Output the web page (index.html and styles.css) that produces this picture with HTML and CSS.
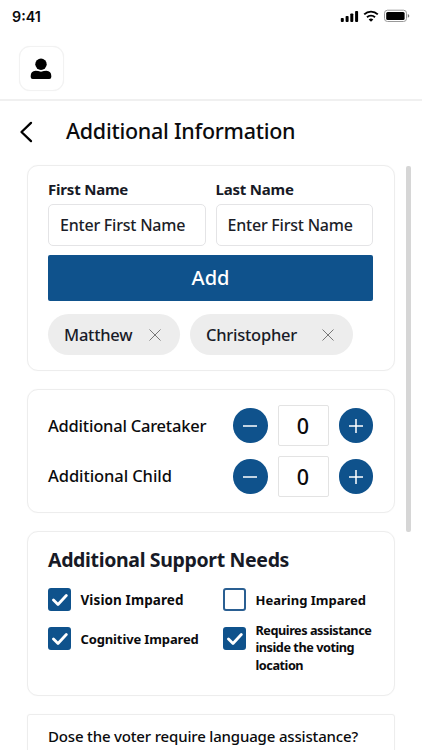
FILE: index.html
```html
<!DOCTYPE html>
<html lang="en">
<head>
<meta charset="utf-8">
<title>Additional Information</title>
<link rel="stylesheet" href="styles.css">
</head>
<body>
<div class="screen">
  <div class="status">
    <span class="time">9:41</span>
    <svg class="status-icons" width="70" height="14" viewBox="0 0 70 14">
      <g fill="#000">
        <rect x="0.8" y="8.9" width="3" height="4" rx="0.9"/>
        <rect x="5.6" y="6.9" width="3" height="6" rx="0.9"/>
        <rect x="10.3" y="4.4" width="3" height="8.500" rx="0.9"/>
        <rect x="15.1" y="1.900" width="3" height="11" rx="0.9"/>
        <path d="M31 12.800l2.300-2.300a3.400 3.400 0 0 0-4.600 0z"/>
      </g>
      <path d="M24.200 5.400a9.700 9.700 0 0 1 13.600 0M27 8.300a5.700 5.700 0 0 1 8 0" fill="none" stroke="#000" stroke-width="1.900"/>
      <rect x="44.500" y="1.200" width="22" height="11.300" rx="3" fill="none" stroke="#999"/>
      <rect x="46.200" y="2.900" width="18.400" height="8" rx="1.500" fill="#000"/>
      <path d="M67.800 5v3.800q1.500-.8 1.500-1.900t-1.500-1.900z" fill="#777"/>
    </svg>
  </div>
  <header class="top">
    <button class="avatar" aria-label="Profile">
      <svg width="22" height="22" viewBox="0 0 22 22">
        <circle cx="11" cy="6.200" r="5.700"/>
        <path d="M5.600 12.800q2.400 0 5.400 1 3-1 5.400-1 4.900.2 4.900 5.200v1q0 2-2 2H2.700q-2 0-2-2v-1q0-5 4.900-5.200z"/>
      </svg>
    </button>
  </header>
  <div class="title-row">
    <svg class="back" width="14" height="22" viewBox="0 0 14 22"><path d="M12 1.900L2.500 11l9.500 9.100"/></svg>
    <h1>Additional Information</h1>
  </div>
  <div class="content">
    <main class="cards">
      <section class="card names">
        <div class="fields">
          <label class="field"><span class="lab">First Name</span><span class="input">Enter First Name</span></label>
          <label class="field"><span class="lab">Last Name</span><span class="input">Enter First Name</span></label>
        </div>
        <button class="add"><span>Add</span></button>
        <div class="chips">
          <span class="chip matthew"><span class="chip-name">Matthew</span><svg width="12" height="12" viewBox="0 0 12 12"><path d="M.5.500l11 11M11.500.500l-11 11"/></svg></span>
          <span class="chip christopher"><span class="chip-name">Christopher</span><svg width="12" height="12" viewBox="0 0 12 12"><path d="M.5.500l11 11M11.500.500l-11 11"/></svg></span>
        </div>
      </section>
      <section class="card counters">
        <div class="counter">
          <span class="counter-name">Additional Caretaker</span>
          <button class="round"><svg width="14" height="14" viewBox="0 0 14 14"><path d="M0 7h14"/></svg></button>
          <span class="count">0</span>
          <button class="round"><svg width="14" height="14" viewBox="0 0 14 14"><path d="M0 7h14M7 0v14"/></svg></button>
        </div>
        <div class="counter">
          <span class="counter-name child">Additional Child</span>
          <button class="round"><svg width="14" height="14" viewBox="0 0 14 14"><path d="M0 7h14"/></svg></button>
          <span class="count">0</span>
          <button class="round"><svg width="14" height="14" viewBox="0 0 14 14"><path d="M0 7h14M7 0v14"/></svg></button>
        </div>
      </section>
      <section class="card support">
        <h2>Additional Support Needs</h2>
        <div class="options">
          <div class="option"><span class="box on"><svg width="16" height="14" viewBox="0 0 16 14"><path d="M1.500 7l4.500 4.500L14.300 2.500"/></svg></span><span class="opt vision">Vision Impared</span></div>
          <div class="option"><span class="box"></span><span class="opt">Hearing Impared</span></div>
          <div class="option"><span class="box on"><svg width="16" height="14" viewBox="0 0 16 14"><path d="M1.500 7l4.500 4.500L14.300 2.500"/></svg></span><span class="opt cognitive">Cognitive Impared</span></div>
          <div class="option"><span class="box on"><svg width="16" height="14" viewBox="0 0 16 14"><path d="M1.500 7l4.500 4.500L14.300 2.500"/></svg></span><span class="opt requires">Requires assistance<br>inside the voting<br>location</span></div>
        </div>
      </section>
      <section class="card language"><p>Dose the voter require language assistance?</p></section>
    </main>
    <div class="scrollbar"></div>
  </div>
</div>
</body>
</html>
```
FILE: styles.css
```css
* { box-sizing: border-box; }
body { margin: 0; background: #fff; color: #0b0b0d; font-family: "Noto Sans", "Open Sans", sans-serif; }
button { border: 0; padding: 0; font: inherit; }
h1, h2, p { margin: 0; }
svg { display: block; flex: none; }
span { white-space: nowrap; }

.screen { width: 422px; height: 750px; overflow: hidden; display: flex; flex-direction: column; }
.screen > * { flex: none; }

.status { height: 32px; padding: 0 12px; display: flex; align-items: center; justify-content: space-between; }
.time { font: 600 14.300px/32px "Inter", sans-serif; padding-top: 1px; }

.top { height: 69px; padding: 14px 19px; border-bottom: 2px solid #f0f0f0; }
.avatar { width: 45px; height: 45px; border: 1.500px solid #f2f2f2; border-radius: 11px; background: #fff; display: flex; align-items: center; justify-content: center; box-shadow: 0 0 1px #f0f0f0; }
.avatar svg { margin-left: -1px; }

.title-row { height: 65px; padding-left: 19px; display: flex; align-items: center; }
.back { margin: -3px 33px 0 0; fill: none; stroke: #000; stroke-width: 2.300; stroke-linecap: round; stroke-linejoin: round; }
h1 { font-size: 21.500px; line-height: 30px; font-weight: 500; margin-top: -5px; letter-spacing: -.27px; }

.content { display: flex; padding-left: 27px; gap: 11px; }
.cards { width: 368px; display: flex; flex-direction: column; gap: 18px; margin-top: -1px; }
.card { border: 1.500px solid #ededed; border-radius: 11px; padding: 0 21px 0 20px; box-shadow: 0 0 1px #eee; }
.scrollbar { width: 5px; height: 366px; border-radius: 2px; background: #d6d6d6; }

.names { height: 206px; padding-top: 13px; }
.fields { display: grid; grid-template-columns: 1fr 1fr; gap: 10px; }
.field { display: flex; flex-direction: column; }
.lab { height: 25px; font-size: 15px; line-height: 20px; font-weight: 700; letter-spacing: -.2px; color: #171a26; }
.input { height: 42px; border: 1px solid #e4e4e6; border-radius: 5px; padding-left: 11px; font-size: 16px; line-height: 40px; font-weight: 500; letter-spacing: -.22px; color: #1c1e28; }
.add { width: 100%; height: 46px; margin-top: 9px; border-radius: 2px; background: #0f528c; color: #fff; font-size: 20px; line-height: 44px; font-weight: 500; }
.chips { display: flex; gap: 10px; margin-top: 13px; }
.chip { height: 41px; padding: 0 19px 0 16px; border-radius: 21px; background: #ededed; display: flex; align-items: center; justify-content: space-between; font-size: 16.500px; font-weight: 500; letter-spacing: -.25px; color: #191b28; }
.chip svg { fill: none; stroke: #777; stroke-width: 1; }
.matthew { width: 132px; }
.christopher { width: 163px; }

.counters { height: 124px; padding-top: 15px; display: flex; flex-direction: column; gap: 10px; }
.counter { height: 41px; display: flex; align-items: center; }
.counter-name { flex: 1; font-size: 16.500px; font-weight: 500; letter-spacing: -.22px; }
.counter-name.child { letter-spacing: -.08px; padding-bottom: 2px; }
.round { width: 34.500px; height: 34.500px; border-radius: 50%; background: #0f528c; display: flex; align-items: center; justify-content: center; }
.round svg { fill: none; stroke: #fff; stroke-width: 1.500; }
.count { width: 51px; height: 41px; margin: 0 10px; border: 1px solid #e3e3e3; border-radius: 2px; text-align: center; font-size: 21.500px; line-height: 39px; font-weight: 500; }

.support { height: 165px; padding-top: 14px; }
h2 { font-size: 19.500px; line-height: 28px; font-weight: 700; letter-spacing: -.35px; color: #171a26; }
.options { display: grid; grid-template-columns: 175px 1fr; grid-template-rows: 23px 50px; row-gap: 11px; margin-top: 14px; }
.option { display: flex; gap: 9.500px; align-items: flex-start; }
.box { flex: none; width: 23px; height: 23px; border: 2px solid #2a5f92; border-radius: 3px; display: flex; align-items: center; justify-content: center; }
.box.on { background: #0f528c; border-color: #0f528c; }
.box svg { fill: none; stroke: #fff; stroke-width: 2.800; stroke-linecap: round; stroke-linejoin: round; }
.opt { font-size: 13px; line-height: 24px; font-weight: 700; }
.vision { font-size: 13.500px; letter-spacing: .1px; }
.option:nth-child(n+3) .box { margin-top: 5px; }
.cognitive { margin-top: 5px; letter-spacing: -.13px; }
.opt.requires { font-size: 12.700px; line-height: 17.300px; letter-spacing: -.46px; }

.language { height: 80px; border-radius: 3px; padding-top: 11px; }
.language p { font-size: 15px; line-height: 21px; font-weight: 500; letter-spacing: -.17px; white-space: nowrap; }
```
